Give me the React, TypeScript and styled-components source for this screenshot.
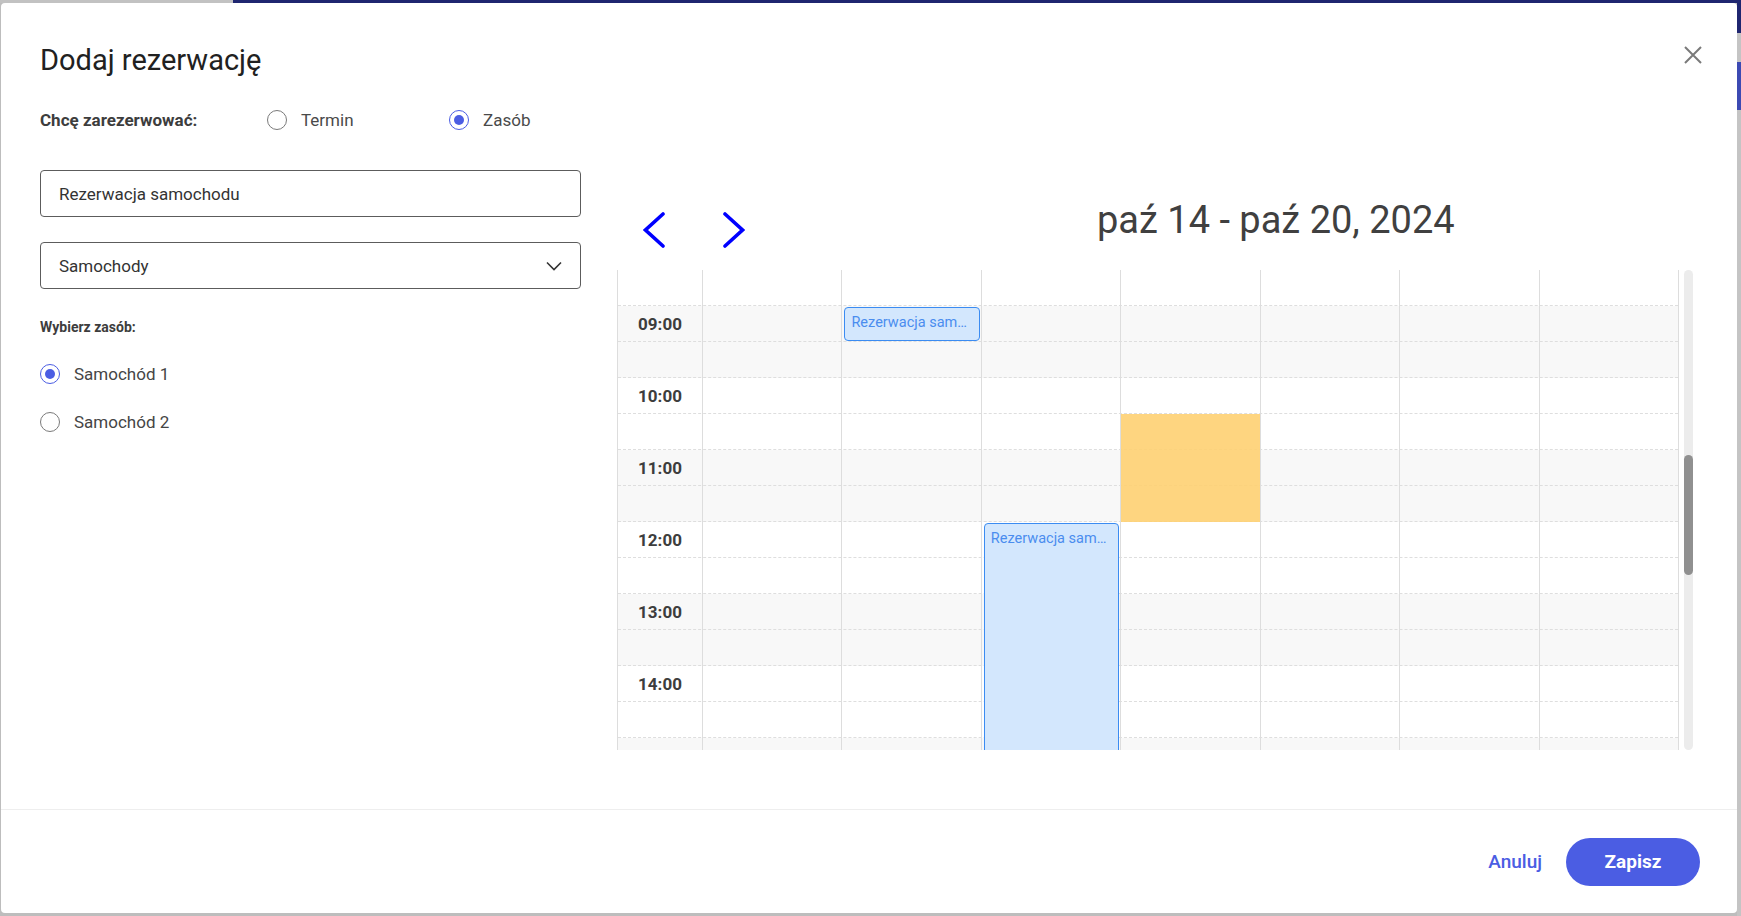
import React from "react";
import styled, { createGlobalStyle } from "styled-components";

const GlobalStyle = createGlobalStyle`
  html, body {
    margin: 0;
    padding: 0;
  }
  body {
    font-family: Roboto, "Noto Sans", "Liberation Sans", sans-serif;
    overflow: hidden;
  }
  * { box-sizing: border-box; }
`;

const Backdrop = styled.div`
  width: 1741px;
  height: 916px;
  padding: 3px 4px 3px 1px;
  background:
    linear-gradient(to right, #c2c2c2 0 233px, #1f2670 233px) top / 100% 3px no-repeat,
    linear-gradient(to bottom, #1f2670 0 33px, #c4c4c4 33px 62px, #3c4ab3 62px 110px, #c4c4c4 110px) right / 4px 100% no-repeat,
    #bdbdbd;
`;

const Dialog = styled.div`
  width: 1736px;
  height: 910px;
  background: #ffffff;
  border-radius: 4px;
  display: flex;
  flex-direction: column;
  overflow: hidden;
`;

const Body = styled.div`
  flex: 1;
  padding: 41px 35px 0 39px;
  display: flex;
  flex-direction: column;
`;

const Header = styled.div`
  display: flex;
  justify-content: space-between;
  align-items: flex-start;
`;

const Title = styled.h1`
  margin: 0;
  font-size: 29px;
  line-height: 33px;
  font-weight: 400;
  color: #212121;
`;

const CloseButton = styled.button`
  margin-top: 2px;
  width: 18px;
  height: 18px;
  padding: 0;
  border: none;
  background: none;
  cursor: pointer;
  display: flex;
`;

const ChoiceRow = styled.div`
  margin-top: 33px;
  height: 20px;
  display: flex;
  align-items: center;
`;

const ChoiceLabel = styled.span`
  width: 227px;
  font-size: 17px;
  font-weight: 700;
  color: #3d3d3d;
`;

const RadioOption = styled.label<{ $width?: number }>`
  display: flex;
  align-items: center;
  gap: 14px;
  width: ${(p) => (p.$width ? `${p.$width}px` : "auto")};
  font-size: 17px;
  color: #4a4a4a;
  cursor: pointer;
`;

const RadioCircle = styled.span<{ $checked?: boolean }>`
  width: 20px;
  height: 20px;
  border-radius: 50%;
  border: 1.5px solid ${(p) => (p.$checked ? "#4b5de3" : "#7a7a7a")};
  display: flex;
  align-items: center;
  justify-content: center;
  flex-shrink: 0;
  &::after {
    content: "";
    width: 10px;
    height: 10px;
    border-radius: 50%;
    background: ${(p) => (p.$checked ? "#4b5de3" : "transparent")};
  }
`;

const Content = styled.div`
  margin-top: 20px;
  display: flex;
  gap: 36px;
`;

const FormColumn = styled.div`
  width: 541px;
  padding-top: 20px;
  display: flex;
  flex-direction: column;
`;

const TextField = styled.div`
  height: 47px;
  border: 1px solid #5c5c5c;
  border-radius: 4px;
  padding: 0 18px;
  display: flex;
  align-items: center;
  justify-content: space-between;
  font-size: 17px;
  color: #333333;
`;

const SelectField = styled(TextField)`
  margin-top: 25px;
`;

const SectionLabel = styled.div`
  margin-top: 30px;
  font-size: 14px;
  line-height: 16px;
  font-weight: 700;
  color: #3d3d3d;
`;

const ResourceList = styled.div`
  margin-top: 29px;
  display: flex;
  flex-direction: column;
  gap: 28px;
`;

const ResourceOption = styled(RadioOption)`
  color: #454545;
`;

const CalendarColumn = styled.div`
  width: 1076px;
  display: flex;
  flex-direction: column;
`;

const Toolbar = styled.div`
  margin-top: 48px;
  display: flex;
  align-items: flex-start;
`;

const NavGroup = styled.div`
  margin-top: 14px;
  padding-left: 26px;
  display: flex;
  gap: 58px;
`;

const NavButton = styled.button`
  width: 22px;
  height: 36px;
  padding: 0;
  border: none;
  background: none;
  display: flex;
  cursor: pointer;
`;

const RangeTitle = styled.h2`
  margin: 0 0 0 352px;
  font-size: 38px;
  line-height: 44px;
  font-weight: 400;
  color: #404040;
`;

const GridArea = styled.div`
  margin-top: 22px;
  display: flex;
  align-items: flex-start;
`;

const GridBody = styled.div`
  position: relative;
  width: 1062px;
  height: 480px;
  overflow: hidden;
  border-left: 1px solid #dddddd;
  border-right: 1px solid #dddddd;
`;

const SlotRow = styled.div<{ $shaded: boolean }>`
  height: 36px;
  display: grid;
  grid-template-columns: 84px 1fr;
  border-bottom: 1px dashed #dedede;
  background: ${(p) => (p.$shaded ? "#f8f8f8" : "#ffffff")};
`;

const TimeLabel = styled.div`
  display: flex;
  align-items: center;
  justify-content: center;
  font-size: 17px;
  font-weight: 700;
  color: #3d3d3d;
`;

const ColumnsLayer = styled.div`
  position: absolute;
  inset: 0;
  display: grid;
  grid-template-columns: 84px repeat(7, 1fr);
`;

const DayColumn = styled.div`
  position: relative;
  border-left: 1px solid #dddddd;
`;

const EventBox = styled.div<{ $top: number; $height: number }>`
  position: absolute;
  top: ${(p) => p.$top}px;
  height: ${(p) => p.$height}px;
  left: 2px;
  right: 1px;
  background: #d3e7fd;
  border: 1px solid #3b8cf2;
  border-radius: 4px;
  padding: 6px 6px 0 6px;
  font-size: 14.5px;
  line-height: 17px;
  color: #4a8def;
  white-space: nowrap;
  overflow: hidden;
  text-overflow: ellipsis;
`;

const BackgroundBlock = styled.div<{ $top: number; $height: number }>`
  position: absolute;
  top: ${(p) => p.$top}px;
  height: ${(p) => p.$height}px;
  left: 0;
  right: 0;
  background: rgba(254, 208, 114, 0.9);
`;

const ScrollTrack = styled.div`
  position: relative;
  margin-left: 5px;
  width: 9px;
  height: 480px;
  border-radius: 5px;
  background: #ececec;
`;

const ScrollThumb = styled.div`
  position: absolute;
  left: 0;
  right: 0;
  top: 185px;
  height: 120px;
  border-radius: 5px;
  background: #909090;
`;

const Footer = styled.div`
  height: 104px;
  border-top: 1px solid #eeeeee;
  display: flex;
  justify-content: flex-end;
  align-items: center;
  padding-right: 37px;
  gap: 24px;
`;

const CancelButton = styled.button`
  border: none;
  background: none;
  padding: 0;
  font-family: inherit;
  font-size: 19px;
  font-weight: 500;
  color: #4b5de3;
  cursor: pointer;
`;

const SaveButton = styled.button`
  width: 134px;
  height: 48px;
  border: none;
  border-radius: 24px;
  background: #4b5de3;
  font-family: inherit;
  font-size: 19px;
  font-weight: 700;
  color: #ffffff;
  cursor: pointer;
`;

type Slot = { label: string; hour: number };

// visible slots: 8:30 through 15:00 (the last one is cut by the scroller)
const slots: Slot[] = [{ label: "", hour: 8 }];
for (let h = 9; h <= 14; h++) {
  slots.push({ label: `${String(h).padStart(2, "0")}:00`, hour: h });
  slots.push({ label: "", hour: h });
}
slots.push({ label: "", hour: 15 });

const Chevron = ({ dir }: { dir: "left" | "right" }) => (
  <svg width="22" height="36" viewBox="0 0 22 36">
    <path
      d={dir === "left" ? "M20 2 L2.5 18 L20 34" : "M2 2 L19.5 18 L2 34"}
      fill="none"
      stroke="#0000ff"
      strokeWidth="3.6"
      strokeLinecap="round"
    />
  </svg>
);

export default function App() {
  return (
    <>
      <GlobalStyle />
      <Backdrop>
        <Dialog>
          <Body>
            <Header>
              <Title>Dodaj rezerwację</Title>
              <CloseButton aria-label="Zamknij">
                <svg width="18" height="18" viewBox="0 0 18 18">
                  <path d="M1 1 L17 17 M17 1 L1 17" stroke="#7a7a7a" strokeWidth="2" />
                </svg>
              </CloseButton>
            </Header>

            <ChoiceRow>
              <ChoiceLabel>Chcę zarezerwować:</ChoiceLabel>
              <RadioOption $width={182}>
                <RadioCircle />
                Termin
              </RadioOption>
              <RadioOption>
                <RadioCircle $checked />
                Zasób
              </RadioOption>
            </ChoiceRow>

            <Content>
              <FormColumn>
                <TextField>Rezerwacja samochodu</TextField>
                <SelectField>
                  Samochody
                  <svg width="16" height="10" viewBox="0 0 16 10">
                    <path d="M1 1.5 L8 8.5 L15 1.5" fill="none" stroke="#333" strokeWidth="1.6" />
                  </svg>
                </SelectField>
                <SectionLabel>Wybierz zasób:</SectionLabel>
                <ResourceList>
                  <ResourceOption>
                    <RadioCircle $checked />
                    Samochód 1
                  </ResourceOption>
                  <ResourceOption>
                    <RadioCircle />
                    Samochód 2
                  </ResourceOption>
                </ResourceList>
              </FormColumn>

              <CalendarColumn>
                <Toolbar>
                  <NavGroup>
                    <NavButton aria-label="Poprzedni">
                      <Chevron dir="left" />
                    </NavButton>
                    <NavButton aria-label="Następny">
                      <Chevron dir="right" />
                    </NavButton>
                  </NavGroup>
                  <RangeTitle>paź 14 - paź 20, 2024</RangeTitle>
                </Toolbar>

                <GridArea>
                  <GridBody>
                    {slots.map((s, i) => (
                      <SlotRow key={i} $shaded={s.hour % 2 === 1}>
                        <TimeLabel>{s.label}</TimeLabel>
                        <div />
                      </SlotRow>
                    ))}
                    <ColumnsLayer>
                      <div />
                      <DayColumn />
                      <DayColumn>
                        <EventBox $top={37} $height={34}>Rezerwacja samochodu</EventBox>
                      </DayColumn>
                      <DayColumn>
                        <EventBox $top={253} $height={300}>Rezerwacja samochodu</EventBox>
                      </DayColumn>
                      <DayColumn>
                        <BackgroundBlock $top={144} $height={108} />
                      </DayColumn>
                      <DayColumn />
                      <DayColumn />
                      <DayColumn />
                    </ColumnsLayer>
                  </GridBody>
                  <ScrollTrack>
                    <ScrollThumb />
                  </ScrollTrack>
                </GridArea>
              </CalendarColumn>
            </Content>
          </Body>
          <Footer>
            <CancelButton>Anuluj</CancelButton>
            <SaveButton>Zapisz</SaveButton>
          </Footer>
        </Dialog>
      </Backdrop>
    </>
  );
}
